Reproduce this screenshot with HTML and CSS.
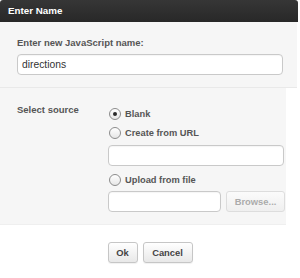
FILE: index.html
```html
<!DOCTYPE html>
<html>
<head>
<meta charset="utf-8">
<link rel="stylesheet" href="styles.css">
</head>
<body>
<div class="dialog">
  <div class="titlebar">Enter Name</div>
  <div class="name-section">
    <div class="label">Enter new JavaScript name:</div>
    <div class="textbox wide">directions</div>
  </div>
  <div class="source-section">
    <div class="label source-label">Select source</div>
    <div class="options">
      <label class="opt"><span class="radio checked"></span>Blank</label>
      <label class="opt"><span class="radio"></span>Create from URL</label>
      <div class="textbox url"></div>
      <label class="opt upload"><span class="radio"></span>Upload from file</label>
      <div class="file-row">
        <div class="textbox file"></div>
        <div class="btn browse">Browse...</div>
      </div>
    </div>
  </div>
  <div class="actions">
    <div class="btn ok">Ok</div>
    <div class="btn cancel">Cancel</div>
  </div>
</div>
</body>
</html>
```
FILE: styles.css
```css
html, body {
  margin: 0;
  padding: 0;
  background: #ffffff;
}
body {
  width: 300px;
  height: 278px;
  overflow: hidden;
  font-family: "Liberation Sans", Arial, sans-serif;
}
.dialog {
  width: 300px;
}
.titlebar {
  width: 290px;
  height: 22px;
  line-height: 22px;
  padding-left: 8px;
  background: linear-gradient(#363636, #282828);
  border-radius: 3px 3px 0 0;
  color: #ffffff;
  font-weight: bold;
  font-size: 9.8px;
}
.name-section {
  width: 280px;
  background: #f6f6f6;
  padding: 15px 0 12px 17px;
  border-bottom: 1px solid #e9e9e9;
}
.label {
  color: #555555;
  font-weight: bold;
  font-size: 9.5px;
  line-height: 12px;
}
.name-section .label {
  margin-bottom: 5px;
}
.textbox {
  box-sizing: border-box;
  height: 21px;
  background: #ffffff;
  border: 1px solid #c9c9c9;
  border-radius: 4px;
  box-shadow: inset 0 1px 1px rgba(0,0,0,0.04);
}
.textbox.wide {
  width: 266px;
  padding-left: 4px;
  line-height: 19px;
  font-size: 10.3px;
  color: #333333;
}
.source-section {
  width: 269px;
  background: #f6f6f6;
  padding: 16px 0 12px 17px;
  display: flex;
  border-bottom: 1px solid #efefef;
}
.source-label {
  width: 91px;
  flex: none;
}
.options {
  display: flex;
  flex-direction: column;
}
.opt {
  height: 19px;
  display: flex;
  align-items: center;
  gap: 4px;
  font-size: 9.3px;
  font-weight: bold;
  color: #555555;
}
.radio {
  box-sizing: border-box;
  width: 12px;
  height: 12px;
  margin-left: 1px;
  border: 1px solid #8c8c8c;
  border-radius: 50%;
  background: linear-gradient(#ffffff, #e6e6e6);
  display: flex;
  align-items: center;
  justify-content: center;
}
.radio.checked::after {
  content: "";
  width: 4px;
  height: 4px;
  border-radius: 50%;
  background: #2a2a2a;
}
.textbox.url {
  width: 176px;
  margin-top: 3px;
}
.opt.upload {
  margin-top: 4px;
}
.file-row {
  display: flex;
  gap: 5px;
  margin-top: 2px;
}
.textbox.file {
  width: 113px;
}
.btn {
  box-sizing: border-box;
  height: 21px;
  border: 1px solid #c6c6c6;
  border-radius: 3px;
  background: linear-gradient(#ffffff, #e8e8e8);
  font-size: 9.4px;
  font-weight: bold;
  color: #444444;
  display: flex;
  align-items: center;
  justify-content: center;
  box-shadow: 0 1px 1px rgba(0,0,0,0.06);
}
.btn.browse {
  width: 59px;
  color: #ababab;
  border-color: #dddddd;
  background: linear-gradient(#fbfbfb, #efefef);
  box-shadow: none;
}
.actions {
  display: flex;
  justify-content: center;
  gap: 5px;
  padding-top: 17px;
}
.btn.ok {
  width: 30px;
}
.btn.cancel {
  width: 50px;
}
```
